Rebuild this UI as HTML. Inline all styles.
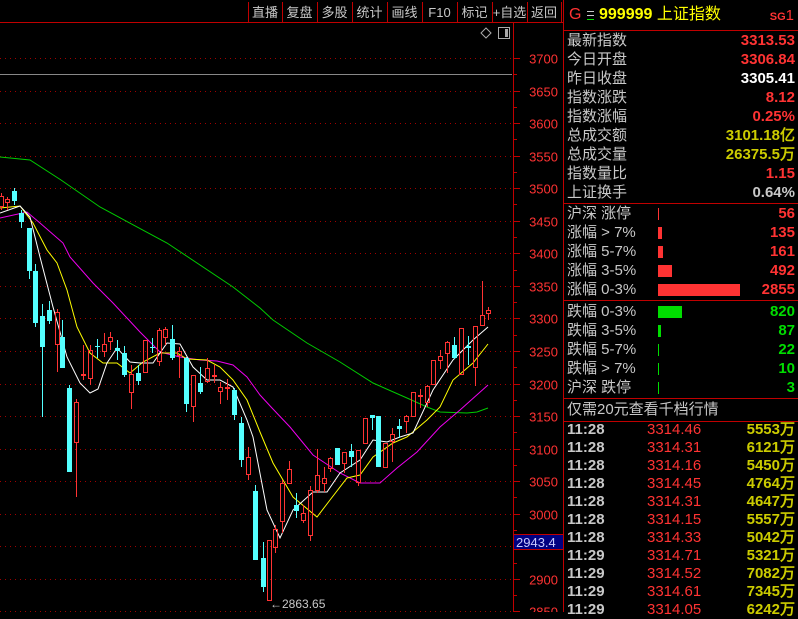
<!DOCTYPE html>
<html><head><meta charset="utf-8"><style>
body{margin:0;background:#000;width:798px;height:612px;overflow:hidden;font-family:"Liberation Sans","Noto Sans CJK SC",sans-serif;}
#wrap{position:relative;width:798px;height:612px;}
.t{position:absolute;white-space:nowrap;font-size:15px;line-height:19px;}
.g{color:#c8c8c8}.r{color:#ff3333}.w{color:#fff}.y{color:#cccc00}.gr{color:#00dd00}
.num{font-weight:bold;font-family:"Liberation Sans",sans-serif;}
</style></head><body><div id="wrap">
<svg id="s" width="798" height="612" style="position:absolute;left:0;top:0"></svg>
<div id="txt"></div>
</div>
<script>
var s=document.getElementById('s'),h='';
function L(x1,y1,x2,y2,c,w,d){h+='<line x1="'+x1+'" y1="'+y1+'" x2="'+x2+'" y2="'+y2+'" stroke="'+c+'" stroke-width="'+(w||1)+'"'+(d?' stroke-dasharray="'+d+'"':'')+'/>';}
function R(x,y,w,hh,f,st){h+='<rect x="'+x+'" y="'+y+'" width="'+w+'" height="'+hh+'" fill="'+f+'"'+(st?' stroke="'+st+'"':'')+'/>';}
function T(x,y,t,c,a,sz){h+='<text x="'+x+'" y="'+y+'" fill="'+c+'" font-size="'+(sz||14)+'" text-anchor="'+(a||'start')+'" font-family="Liberation Sans,Noto Sans CJK SC,sans-serif">'+t+'</text>';}
L(0,22.5,563,22.5,'#c00000',1);
var bx=[248,282,317,352,387,422,457,492,527,561],bl=['直播','复盘','多股','统计','画线','F10','标记','+自选','返回'];
for(var i=0;i<bx.length;i++)L(bx[i]+.5,2,bx[i]+.5,22,'#c00000');
for(i=0;i<bl.length;i++)T((bx[i]+bx[i+1])/2,17,bl[i],'#c8c8c8','middle',13);
h+='<path d="M486 28 L491 33 L486 38 L481 33 Z" fill="none" stroke="#aaa"/>';
R(498.5,27.5,11,11,'none','#aaa');R(505,29,3,8,'#aaa');
var lab=[3700,3650,3600,3550,3500,3450,3400,3350,3300,3250,3200,3150,3100,3050,3000,2950,2900,2850];
function Y(p){return 58+(3700-p)*0.651;}
lab.forEach(function(p){var y=Math.round(Y(p))+.5;L(0,y,512,y,'#a00000',1,'1 4');L(513,y,520,y,'#c00000');if(p!=2950)T(558,y+5,p,'#ff3333','end',13);var y2=Math.round(Y(p-25))+.5;L(513,y2,517,y2,'#c00000');});
L(0,74.5,512,74.5,'#888');
L(513.5,23,513.5,612,'#c00000');
L(563.5,0,563.5,612,'#c00000');
R(514,535,49,14,'#000080');L(514,549.5,563,549.5,'#c00000');L(514,534.5,563,534.5,'#c00000');
T(516,547,'2943.4','#c8c8ff','start',13);
function P(pts,c){h+='<polyline fill="none" stroke="'+c+'" stroke-width="1" points="'+pts+'"/>';}
P('0,157 30,160 61,180 100,207 167,243 233,287 260,308 273,320 307,343 340,362 373,383 407,398 427,407 440,412 467,413 477,412 488,408','#00cc00');
P('0,218 27,212 40,223 63,243 70,257 93,283 113,303 140,332 160,352 180,357 200,360 217,361 233,365 247,377 260,395 272,408 290,427 313,455 340,473 360,483 380,483 397,468 417,452 440,427 460,410 488,385','#ee00ee');
P('0,208 20,206 33,223 47,250 57,263 67,290 77,327 90,353 103,363 117,363 130,373 143,362 160,353 177,353 187,359 207,360 220,367 233,380 247,400 260,432 273,463 293,497 317,517 330,500 347,478 360,475 373,457 393,443 407,437 427,420 440,407 453,380 473,363 488,344','#ffff00');
P('0,213 20,206 30,217 40,257 53,307 67,357 80,383 90,393 98,389 107,363 117,348 130,362 140,363 153,363 167,343 180,344 193,367 207,380 220,380 233,387 247,420 253,437 267,510 280,538 293,510 313,492 327,492 340,473 360,460 373,440 387,442 400,437 413,433 433,390 453,360 473,340 488,327','#ffffff');
var C=[[1,196,207,193,210,'r'],[7,199,203,197,210,'r'],[14,191,201,188,205,'c'],[21,213,222,210,228,'c'],[29,228,271,228,279,'c'],[35,271,323,264,327,'c'],[42,316,347,304,417,'c'],[49,310,321,301,324,'c'],[57,312,345,309,372,'r'],[62,337,368,320,368,'c'],[69,388,472,385,472,'c'],[76,402,443,399,497,'r'],[83,374,376,345,380,'r'],[90,350,379,345,385,'r'],[97,346,347,339,358,'c'],[104,344,352,333,357,'r'],[110,337,342,332,350,'r'],[117,348,351,340,360,'c'],[124,353,375,346,377,'c'],[131,374,393,365,409,'r'],[138,373,381,365,385,'c'],[145,340,373,340,373,'r'],[152,347,348,338,353,'c'],[159,330,362,328,366,'r'],[165,329,338,327,345,'r'],[172,339,358,325,360,'c'],[179,351,356,347,378,'r'],[186,358,404,357,412,'c'],[193,375,407,375,422,'r'],[200,383,392,367,394,'c'],[207,368,382,358,383,'r'],[214,375,377,365,383,'r'],[220,387,392,382,404,'r'],[227,387,389,379,400,'r'],[234,390,415,388,420,'c'],[241,423,460,417,467,'c'],[248,457,475,447,480,'r'],[255,491,560,485,560,'c'],[263,558,587,542,592,'c'],[269,540,601,540,601,'r'],[275,529,548,525,553,'r'],[282,483,522,480,533,'r'],[289,469,484,461,484,'r'],[296,505,511,493,518,'c'],[303,513,521,505,523,'r'],[310,490,536,486,541,'r'],[317,475,491,449,493,'r'],[324,478,484,467,492,'r'],[330,458,469,457,472,'r'],[337,448,465,448,465,'c'],[344,452,464,452,473,'r'],[351,451,457,444,467,'c'],[358,450,483,450,486,'r'],[365,418,444,418,444,'r'],[372,415,418,415,430,'c'],[378,416,467,416,467,'c'],[385,443,468,443,468,'r'],[392,434,442,428,462,'r'],[399,426,429,419,438,'c'],[406,416,422,415,433,'r'],[413,392,417,392,417,'r'],[420,395,397,389,408,'r'],[427,386,403,385,407,'r'],[433,360,385,360,385,'r'],[440,356,361,350,369,'r'],[447,342,354,341,373,'r'],[454,345,358,337,359,'c'],[461,328,375,328,375,'r'],[468,346,348,336,365,'c'],[475,326,368,326,386,'r'],[482,315,326,281,326,'r'],[488,310,314,307,320,'r']];
C.forEach(function(c){var x=c[0];if(c[5]=='c'){L(x+.5,c[3],x+.5,c[4],'#54ffff');R(x-2,c[1],5,Math.max(1,c[2]-c[1]),'#54ffff');}else{if(c[3]<c[1])L(x+.5,c[3],x+.5,c[1],'#ff3333');if(c[4]>c[2])L(x+.5,c[2],x+.5,c[4],'#ff3333');if(c[2]-c[1]<2)L(x-2,c[1]+.5,x+3,c[1]+.5,'#ff3333');else R(x-1.5,c[1]+.5,4,c[2]-c[1]-1,'none','#ff3333');}});
T(270,608,'←2863.65','#c8c8c8','start',12);
[30.5,203.5,300.5,398.5,421.5].forEach(function(y){L(563,y,798,y,'#c00000');});
function B(y,w,c){R(658,y-6,w,12,c);}
B(214,1,'#ff3333');B(233,4,'#ff3333');B(252,5,'#ff3333');B(271,14,'#ff3333');B(290,82,'#ff3333');
B(312,24,'#00dd00');B(331,3,'#00dd00');B(350,1,'#00dd00');B(369,1,'#00dd00');B(388,1,'#00dd00');
// menu glyph
L(587,11.5,594,11.5,'#c8c8c8');L(587,15.5,594,15.5,'#c8c8c8');L(587,19.5,594,19.5,'#00dd00');
s.innerHTML=h;
var t='';
function D(x,y,txt,cls,right){t+='<div class="t '+cls+'" style="'+(right?'right:'+(798-x)+'px':'left:'+x+'px')+';top:'+(y-10)+'px">'+txt+'</div>';}
t+='<div class="t" style="left:569px;top:5px;font-size:16px"><span class="r">G</span></div>';
t+='<div class="t" style="left:599px;top:5px;font-size:16px"><span style="color:#ff0;font-weight:bold">999999</span> <span style="color:#ff0">上证指数</span></div>';
D(794,16,'<span style="font-size:11px;font-weight:bold">SG</span>1','r',1);
var rows=[['最新指数','3313.53','r'],['今日开盘','3306.84','r'],['昨日收盘','3305.41','w'],['指数涨跌','8.12','r'],['指数涨幅','0.25%','r'],['总成交额','3101.18亿','y'],['总成交量','26375.5万','y'],['指数量比','1.15','r'],['上证换手','0.64%','g']];
rows.forEach(function(r,i){var y=41+i*19;D(567,y,r[0],'g');D(795,y,r[1],r[2]+' num',1);});
var r2=[['沪深 涨停','56','r'],['涨幅 &gt; 7%','135','r'],['涨幅 5-7%','161','r'],['涨幅 3-5%','492','r'],['涨幅 0-3%','2855','r']];
r2.forEach(function(r,i){var y=214+i*19;D(567,y,r[0],'g');D(795,y,r[1],r[2]+' num',1);});
var r3=[['跌幅 0-3%','820'],['跌幅 3-5%','87'],['跌幅 5-7%','22'],['跌幅 &gt; 7%','10'],['沪深 跌停','3']];
r3.forEach(function(r,i){var y=312+i*19;D(567,y,r[0],'g');D(795,y,r[1],'gr num',1);});
D(567,410,'仅需20元查看千档行情','g');
var tr=[['11:28','3314.46','5553'],['11:28','3314.31','6121'],['11:28','3314.16','5450'],['11:28','3314.45','4764'],['11:28','3314.31','4647'],['11:28','3314.15','5557'],['11:28','3314.33','5042'],['11:29','3314.71','5321'],['11:29','3314.52','7082'],['11:29','3314.61','7345'],['11:29','3314.05','6242']];
tr.forEach(function(r,i){var y=430+i*18;D(567,y,r[0],'g num');D(647,y,r[1],'r');D(795,y,r[2]+'万','y num',1);});
document.getElementById('txt').innerHTML=t;
</script></body></html>
